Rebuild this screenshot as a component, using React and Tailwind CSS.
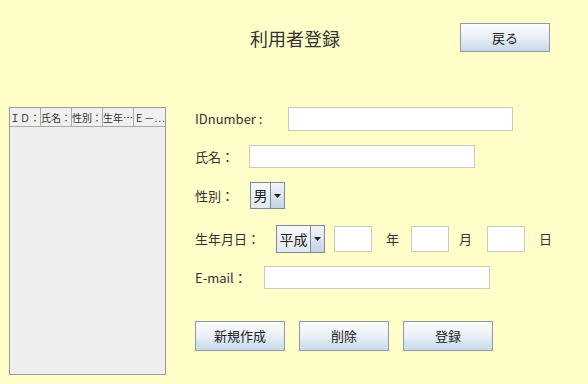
import React from "react";

const font = { fontFamily: '"Noto Sans CJK JP", "Liberation Sans", sans-serif' };

const Field = ({ w }) => (
  <div className={`h-full ${w} bg-white border border-[#c9c9c0]`} />
);

const Combo = ({ value, textW }) => (
  <div className="h-full flex border border-[#7d8a99] bg-[#eef1f6]">
    <div className={`${textW} flex items-center justify-center text-[14px] text-[#222] bg-gradient-to-b from-[#f7f8fb] to-[#e2e8f0]`}>
      {value}
    </div>
    <div className="w-[14px] flex items-center justify-center border-l border-[#7d8a99] bg-gradient-to-b from-[#f3f6fa] to-[#c3d3e6]">
      <svg width="7" height="4" viewBox="0 0 7 4">
        <path d="M0 0h7L3.5 4z" fill="#222" />
      </svg>
    </div>
  </div>
);

const Btn = ({ children, className = "" }) => (
  <button className={`w-[90px] h-full border border-[#8f9aa6] bg-gradient-to-b from-[#fbfcfe] via-[#e9eff6] to-[#c8d8ea] text-[13px] text-[#222] ${className}`}>
    {children}
  </button>
);

const cols = ["ＩＤ：", "氏名：", "性別：", "生年…", "Ｅ－…"];

export default function App() {
  return (
    <div className="w-[588px] h-[384px] bg-[#fffdc8] flex flex-col text-[#333]" style={font}>
      <div className="flex items-center h-[29px] mt-[23px]">
        <div className="ml-[250px] w-[91px] text-[18px] text-[#333] leading-none">利用者登録</div>
        <Btn className="ml-[119px]">戻る</Btn>
      </div>

      <div className="flex mt-[55px]">
        <div className="ml-[9px] w-[157px] h-[268px] border border-[#9a9a9a] bg-[#eeeeee] flex flex-col">
          <div className="flex h-[19px]">
            {cols.map((c, i) => (
              <div
                key={i}
                className="w-[31px] shrink-0 overflow-hidden whitespace-nowrap flex items-center justify-center text-[10px] text-[#333] border-r border-b border-[#a8a8a8] last:border-r-0 bg-[#f0f0f0]"
              >
                {c}
              </div>
            ))}
          </div>
        </div>

        <div className="ml-[29px] flex flex-col text-[13px]">
          <div className="flex items-center h-[24px]">
            <span className="w-[93px]">IDnumber :</span>
            <Field w="w-[225px]" />
          </div>
          <div className="flex items-center h-[23px] mt-[14px]">
            <span className="w-[54px]">氏名：</span>
            <Field w="w-[226px]" />
          </div>
          <div className="flex items-center h-[27px] mt-[14px]">
            <span className="w-[55px]">性別：</span>
            <Combo value="男" textW="w-[19px]" />
          </div>
          <div className="flex items-center h-[28px] mt-[16px]">
            <span className="w-[81px]">生年月日：</span>
            <Combo value="平成" textW="w-[33px]" />
            <div className="h-[26px] ml-[9px]"><Field w="w-[38px]" /></div>
            <span className="ml-[14px] w-[27px]">年</span>
            <div className="h-[26px] ml-[-2px]"><Field w="w-[38px]" /></div>
            <span className="ml-[10px] w-[28px]">月</span>
            <div className="h-[26px]"><Field w="w-[38px]" /></div>
            <span className="ml-[14px]">日</span>
          </div>
          <div className="flex items-center h-[23px] mt-[13px]">
            <span className="w-[69px]">E-mail：</span>
            <Field w="w-[226px]" />
          </div>
          <div className="flex h-[30px] mt-[32px] gap-[14px]">
            <Btn>新規作成</Btn>
            <Btn>削除</Btn>
            <Btn>登録</Btn>
          </div>
        </div>
      </div>
    </div>
  );
}
